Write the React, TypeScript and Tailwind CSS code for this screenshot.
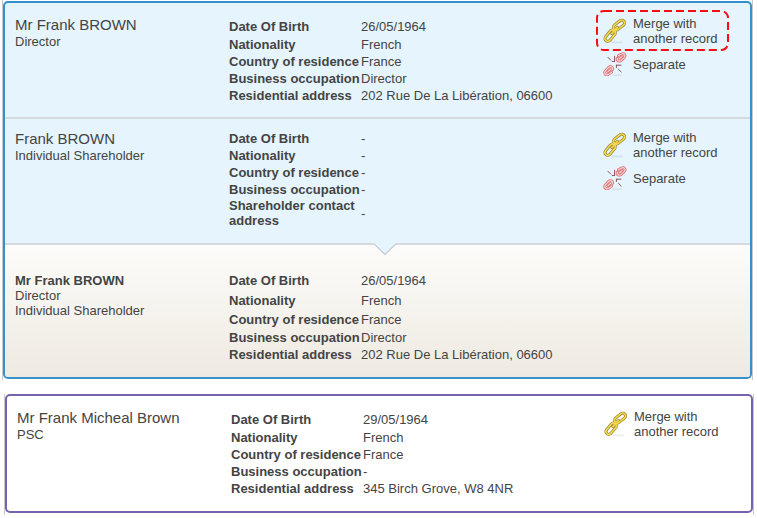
import React from 'react';

type Row = { label: string; value: string; size?: 'md' | 'lg' };

type RecordProps = {
  name: string;
  roles: string[];
  rows: Row[];
  bold?: boolean;
  actions?: React.ReactNode;
  className: string;
};

function MergeIcon() {
  const links = (
    <>
      <rect x="0.8" y="14.8" width="13" height="5.6" rx="2.8" transform="rotate(-50 7.3 17.8)" />
      <rect x="10" y="4.2" width="12.4" height="5.6" rx="2.8" transform="rotate(-38 16.2 7.2)" />
      <path d="M8.8 15.6 14.4 9.4" strokeLinecap="round" />
    </>
  );
  return (
    <svg className="h-[26px] w-6 shrink-0" viewBox="0 0 24 26" fill="none" aria-hidden="true">
      <path d="M9 24.4h10" stroke="#8a939a" strokeWidth="1.6" strokeLinecap="round" opacity="0.18" />
      <g stroke="#97803a" strokeWidth="3">{links}</g>
      <g stroke="#f2da4a" strokeWidth="1.6">{links}</g>
    </svg>
  );
}

function SeparateIcon() {
  const links = (
    <>
      <path d="M9.6 17.4c.6-2.6-2.4-3.6-4.2-1.8l-3 3.2c-1.8 2.4.4 5 3 3.6l3.2-2.2" />
      <path d="M5 19.6 8 17" />
      <path d="M14.2 6.2c-.8 2.6 2 3.8 4 2.2l3-2.8c2-2.2 0-4.8-2.6-3.6l-3.2 1.8" />
      <path d="M16 7 19 4.6" />
    </>
  );
  return (
    <svg className="h-6 w-6 shrink-0" viewBox="0 0 24 24" fill="none" strokeLinecap="round" aria-hidden="true">
      <path d="M10 23.2h8" stroke="#8a939a" strokeWidth="1.4" opacity="0.18" />
      <g stroke="#d86f74" strokeWidth="2.8">{links}</g>
      <g stroke="#fdd5d6" strokeWidth="1.2">{links}</g>
      <g stroke="#8a5358" strokeWidth="1">
        <path d="M5 5.4 7.6 8" />
        <path d="M11.6 4.2v5.2M9.2 9.4h2.4" />
        <path d="M18 13.2h-4.6M13.4 13.2v2.4" />
        <path d="M15.4 17.2 18.2 20" />
      </g>
    </svg>
  );
}

function MergeButton({ highlighted = false }: { highlighted?: boolean }) {
  return (
    <button type="button" className="relative flex w-32 items-center gap-1.5 text-left">
      {highlighted && (
        <svg className="absolute -top-1.5 -left-2 h-[42px] w-[135px]" aria-hidden="true">
          <rect x="2" y="1" width="131" height="39" rx="7" fill="none" stroke="#f80d12" strokeWidth="2" strokeDasharray="8 4" />
        </svg>
      )}
      <MergeIcon />
      <span>
        Merge with
        <br />
        another record
      </span>
    </button>
  );
}

function SeparateButton() {
  return (
    <button type="button" className="mt-1.5 flex items-center gap-1.5 text-left">
      <SeparateIcon />
      <span>Separate</span>
    </button>
  );
}

function PersonRecord({ name, roles, rows, bold = false, actions, className }: RecordProps) {
  return (
    <section className={`grid grid-cols-[214px_1fr_147px] pl-2.5 ${className}`}>
      <div>
        <h2 className={bold ? 'pt-[3px] font-bold' : 'text-[15px] leading-[18px]'}>{name}</h2>
        {roles.map((role) => (
          <p key={role}>{role}</p>
        ))}
      </div>
      <div>
        <table className="border-collapse">
          <tbody>
            {rows.map(({ label, value, size }) => (
              <tr key={label} className={size === 'lg' ? 'h-5' : size === 'md' ? 'h-[19px]' : 'h-[17px]'}>
                <th scope="row" className="w-[132px] max-w-[132px] p-0 text-left align-middle font-bold">
                  {label}
                </th>
                <td className="p-0 align-middle">{value}</td>
              </tr>
            ))}
          </tbody>
        </table>
      </div>
      <div>{actions}</div>
    </section>
  );
}

const address = '202 Rue De La Libération, 06600';

export default function App() {
  return (
    <main className="bg-white pr-1 pl-0.5 font-['Liberation_Sans',Arial,sans-serif] text-[13px] leading-[15px] text-[#444444]">
      <div className="border-x border-[#c9c9c9] pt-px pb-px">
        <div className="overflow-hidden rounded-[5px] border-2 border-[#3590cb] bg-[#e5f4fd]">
          <PersonRecord
            className="border-b-2 border-[#d5dadf] pt-[13px] pb-[13px]"
            name="Mr Frank BROWN"
            roles={['Director']}
            rows={[
              { label: 'Date Of Birth', value: '26/05/1964', size: 'lg' },
              { label: 'Nationality', value: 'French' },
              { label: 'Country of residence', value: 'France' },
              { label: 'Business occupation', value: 'Director' },
              { label: 'Residential address', value: address },
            ]}
            actions={
              <>
                <MergeButton highlighted />
                <SeparateButton />
              </>
            }
          />
          <PersonRecord
            className="border-b-2 border-[#d5dadf] pt-[11px] pb-[15px]"
            name="Frank BROWN"
            roles={['Individual Shareholder']}
            rows={[
              { label: 'Date Of Birth', value: '-' },
              { label: 'Nationality', value: '-' },
              { label: 'Country of residence', value: '-' },
              { label: 'Business occupation', value: '-' },
              { label: 'Shareholder contact address', value: '-' },
            ]}
            actions={
              <>
                <MergeButton />
                <SeparateButton />
              </>
            }
          />
          <div className="relative bg-linear-to-b from-[#fdfcfa] to-[#eeeae1]">
            <svg className="absolute -top-0.5 left-[51%] h-3 w-[22px] -translate-x-1/2" viewBox="0 0 22 12" aria-hidden="true">
              <path d="M0 0h22v1L11 11.5 0 1z" fill="#e5f4fd" />
              <path d="M0 1 11 11.5 22 1" fill="none" stroke="#c4ccd4" strokeWidth="1.2" />
            </svg>
            <PersonRecord
              className="pt-[25px] pb-3.5"
              bold
              name="Mr Frank BROWN"
              roles={['Director', 'Individual Shareholder']}
              rows={[
                { label: 'Date Of Birth', value: '26/05/1964', size: 'lg' },
                { label: 'Nationality', value: 'French', size: 'lg' },
                { label: 'Country of residence', value: 'France', size: 'md' },
                { label: 'Business occupation', value: 'Director' },
                { label: 'Residential address', value: address },
              ]}
            />
          </div>
        </div>
      </div>
      <div className="mt-3.5 -mr-px ml-0.5 border-x border-[#c9c9c9] pb-0.5">
        <div className="rounded-[5px] border-2 border-[#7663ad] bg-white">
          <PersonRecord
            className="pt-[13px] pb-3.5"
            name="Mr Frank Micheal Brown"
            roles={['PSC']}
            rows={[
              { label: 'Date Of Birth', value: '29/05/1964', size: 'lg' },
              { label: 'Nationality', value: 'French' },
              { label: 'Country of residence', value: 'France' },
              { label: 'Business occupation', value: '-' },
              { label: 'Residential address', value: '345 Birch Grove, W8 4NR' },
            ]}
            actions={<MergeButton />}
          />
        </div>
      </div>
    </main>
  );
}
